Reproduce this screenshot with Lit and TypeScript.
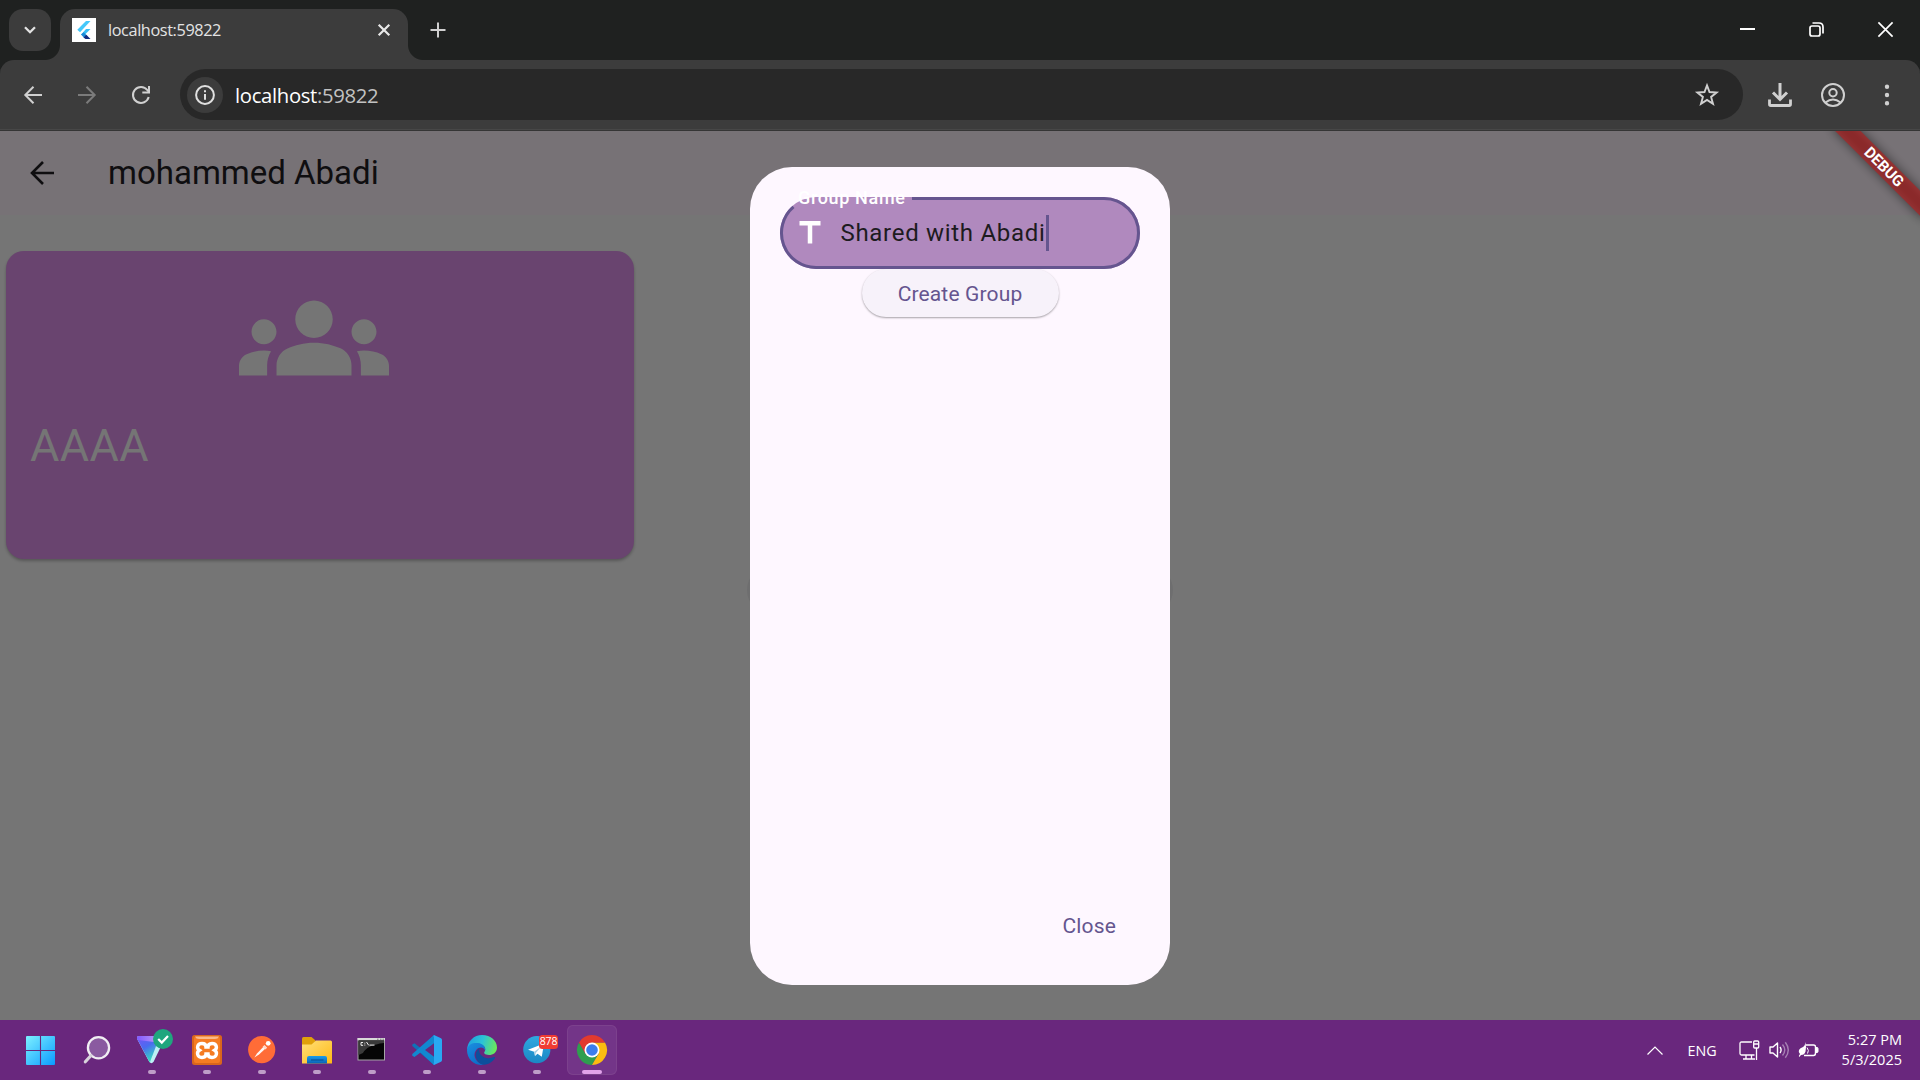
import { LitElement, html, css, nothing } from "lit";
import { customElement } from "lit/decorators.js";

interface TaskItem {
  name: string;
  state: "pinned" | "running" | "active";
  icon: unknown;
}

const startIcon = html`<svg class="ic" viewBox="0 0 30 30">
  <defs>
    <linearGradient id="w" x1="0" y1="0" x2="1" y2="1">
      <stop offset="0" stop-color="#7df0ff" /><stop offset="1" stop-color="#0a9bff" />
    </linearGradient>
  </defs>
  <rect x="-1" y="1" width="29" height="29" rx="1" fill="url(#w)" />
  <path d="M13.500 0v30M-1 15.500h30" stroke="#69277d" stroke-width="1.100" />
</svg>`;

const searchIcon = html`<svg class="ic" viewBox="0 0 30 30">
  <circle cx="16.500" cy="12.800" r="10.600" fill="#8a5aa0" stroke="#f1eef3" stroke-width="2.300" />
  <path d="M9 20.500 3.300 26.800" stroke="#d8d3dc" stroke-width="3.200" stroke-linecap="round" />
</svg>`;

const vpnIcon = html`<svg class="ic" viewBox="0 0 30 30">
  <defs>
    <linearGradient id="v1" x1="0" y1="0" x2=".5" y2="1">
      <stop offset="0" stop-color="#7a52f5" /><stop offset=".5" stop-color="#4a6cf0" /><stop offset="1" stop-color="#35dcc0" />
    </linearGradient>
    <linearGradient id="v2" x1="0" y1="0" x2="1" y2="0">
      <stop offset="0" stop-color="#8158ff" /><stop offset="1" stop-color="#c9a8f5" />
    </linearGradient>
  </defs>
  <path d="M0 2.700Q0 1.100 1.600 1.100H26Q28.500 1.500 27.300 4.500L16.600 26.800Q14.400 29.500 12.200 26.800L.4 4.500Z" fill="#bdf0f5" />
  <path d="M0 3 2 1.100 21 6 12.800 27.500 .4 4.500Z" fill="url(#v1)" />
  <path d="M0 2.700Q0 1.100 1.600 1.100H26L21 7.500 1 5.100Z" fill="url(#v2)" />
  <circle cx="26" cy="4" r="10" fill="#1fa67e" />
  <path d="m21.200 4 3.600 3.600 6.200-6.600" fill="none" stroke="#fff" stroke-width="2.200" />
</svg>`;

const xamppIcon = html`<svg class="ic" viewBox="0 0 30 30">
  <rect width="30" height="30" rx="2.500" fill="#d9661c" />
  <rect x="2" y="1.500" width="26" height="26.500" rx="2" fill="#f57c22" />
  <path d="M3 1.500h24q-1 2.500-4 2.500H7q-3 0-4-2.500Z" fill="#f9b98b" />
  <path d="M10 8.500c3 0 4 1.500 4 3.500h2c0-2 1-3.500 4-3.500 5 0 5.500 5 2.600 6.800 3.200 2 2.200 7.200-2.600 7.200-3 0-4-1.500-4-3.500h-2c0 2-1 3.500-4 3.500-4.800 0-5.800-5.200-2.600-7.200C4.500 13.500 5 8.500 10 8.500Z" fill="none" stroke="#fff" stroke-width="3.400" />
</svg>`;

const postmanIcon = html`<svg class="ic" viewBox="0 0 30 30">
  <circle cx="14.700" cy="14.700" r="13.600" fill="#ff6c37" />
  <path d="M7.400 22.500 10 18.400 17.600 10.500 19.600 12.500 12 19.500Z" fill="#fff" opacity=".95" />
  <path d="m16.500 10.800 2.800 2.900" stroke="#ffd9cb" stroke-width="2.500" />
  <circle cx="21.200" cy="8.300" r="2.400" fill="#fff" />
</svg>`;

const folderIcon = html`<svg class="ic" viewBox="0 0 30 30">
  <defs>
    <linearGradient id="f1" x1="0" y1="0" x2="1" y2="1">
      <stop offset="0" stop-color="#ffe07a" /><stop offset="1" stop-color="#ffb915" />
    </linearGradient>
    <linearGradient id="f2" x1="0" y1="0" x2="0" y2="1">
      <stop offset="0" stop-color="#1b9de8" /><stop offset="1" stop-color="#0a62b5" />
    </linearGradient>
  </defs>
  <path d="M0 3.500Q0 2 1.500 2H9.500L13.500 5.500V12H0Z" fill="#e0a00a" />
  <path d="M0 9.500H9.500L14 5.500H28.500Q30 5.500 30 7V28.500H0Z" fill="url(#f1)" />
  <path d="M5 28.500V23q0-2 2-2H23q2 0 2 2v5.500Z" fill="url(#f2)" />
  <path d="M9 25h12.500" stroke="#0a4f96" stroke-width="1.100" />
</svg>`;

const cmdIcon = html`<svg class="ic" viewBox="0 0 30 30">
  <rect x="1" y="3.500" width="26.500" height="21.500" fill="#050505" stroke="#a5a5a5" stroke-width="1" />
  <path d="M1.500 6h25.500V8Q10 10 6 18L1.500 20Z" fill="#3a3a3a" />
  <rect x=".5" y="3" width="27.500" height="2.300" fill="#d9d9d9" />
  <path d="M20 4.200h1.500m1.500 0h1.500m1 0h1.500" stroke="#777" stroke-width="1" />
  <path d="M6.100 7.500H4v2.800h2.100M7.800 7.700v.9m0 1v.9M9.500 7l2.200 3.300M12.500 10.100h5" stroke="#eee" stroke-width="1" fill="none" />
</svg>`;

const codeIcon = html`<svg class="ic" viewBox="0 0 30 30">
  <path d="M22 0 8.500 13 2.500 8.200.3 9.400V11L22 30l1-8V7Z" fill="#0f71b8" />
  <path d="M22 30 8.500 17.500 2.500 22 .3 20.800V19L22 0Z" fill="#1188d0" />
  <path d="M22 0 29 3.200Q30 3.800 30 5V25Q30 26.200 29 26.800L22 30Q21 29.500 22 27.500V2.500Q21 .8 22 0Z" fill="#29a8f2" />
  <path d="M22 8.300V21.700L13 15Z" fill="#69277d" />
</svg>`;

const edgeIcon = html`<svg class="ic" viewBox="0 0 30 30">
  <defs>
    <linearGradient id="e1" x1="0" y1=".3" x2="1" y2=".5">
      <stop offset="0" stop-color="#1f9fe0" /><stop offset=".5" stop-color="#2cc3d6" /><stop offset="1" stop-color="#6be85a" />
    </linearGradient>
    <linearGradient id="e2" x1="0" y1="0" x2=".6" y2="1">
      <stop offset="0" stop-color="#1b8fe0" /><stop offset="1" stop-color="#0c6cc8" />
    </linearGradient>
  </defs>
  <path d="M0 15C.5 6 7 0 15 0c9 0 15 6 15 12.500 0 5-4 7.500-8 7.500-4.500 0-5.500-2-4.500-3.200 2-2.500.5-7.300-5.500-7.300C6 9.500 1 12 0 15Z" fill="url(#e1)" />
  <path d="M0 15C1 9 6 7.500 11 8c5 .5 8 4 7 7.500-1-4-7-4-9.500.5-3 5.500 1 12 8.500 14C7 31 0 24 0 15Z" fill="url(#e2)" />
  <path d="M12.500 13.200C6 17 8.500 28.500 17 29.800 22 29.500 26 26.500 28 23c.5-1-.3-1.300-1-1-8 3.500-16.500-1.500-14.500-8.800Z" fill="#0d4f9c" />
</svg>`;

const telegramIcon = html`<svg class="ic" viewBox="0 0 30 30">
  <defs>
    <linearGradient id="t1" x1="0" y1="0" x2="0" y2="1">
      <stop offset="0" stop-color="#2fa9e0" /><stop offset="1" stop-color="#1b87c4" />
    </linearGradient>
  </defs>
  <circle cx="14.800" cy="14.700" r="13.600" fill="url(#t1)" />
  <path d="M6 14.800 22 8.500 19.800 21.800 15.500 18.800 13 21 12.200 16.800Z" fill="#fff" />
  <path d="m12.200 16.800 7-5.200-5.200 6.200-1 3.200Z" fill="#a9cfe4" />
</svg><span class="badge">878</span>`;

const chromeIcon = html`<svg class="ic" viewBox="0 0 30 30">
  <path d="M2 7.500A15 15 0 0 0 15 30L21.500 18.800 8.500 18.800Z" fill="#2f9e4f" />
  <path d="M28 7.500A15 15 0 0 1 15 30L21.600 18.700 15 7.500Z" fill="#fbbc10" />
  <path d="M2 7.500 8.500 18.800 15 15V7.500H28A15 15 0 0 0 2 7.500Z" fill="#e23a2e" />
  <circle cx="15" cy="15" r="7.500" fill="#fff" />
  <circle cx="15" cy="15" r="5.800" fill="#3b7ded" />
</svg>`;

const tasks: TaskItem[] = [
  { name: "start", state: "pinned", icon: startIcon },
  { name: "search", state: "pinned", icon: searchIcon },
  { name: "vpn", state: "running", icon: vpnIcon },
  { name: "xampp", state: "running", icon: xamppIcon },
  { name: "postman", state: "running", icon: postmanIcon },
  { name: "files", state: "running", icon: folderIcon },
  { name: "terminal", state: "running", icon: cmdIcon },
  { name: "code", state: "running", icon: codeIcon },
  { name: "edge", state: "running", icon: edgeIcon },
  { name: "telegram", state: "running", icon: telegramIcon },
  { name: "chrome", state: "active", icon: chromeIcon },
];

@customElement("browser-chrome")
class BrowserChrome extends LitElement {
  static styles = css`
    :host { display: flex; flex-direction: column; height: 131px; background: #1f2120; font-family: "Open Sans", "Noto Sans", sans-serif; color: #e3e3e3; }
    svg { display: block; fill: none; overflow: visible; flex: none; }
    .strip { display: flex; height: 60px; box-sizing: border-box; padding-top: 9px; }
    .list { width: 42px; height: 42px; margin-left: 9px; border-radius: 14px; background: #3c3c3c; display: grid; place-items: center; }
    .tab { position: relative; margin-left: 9px; width: 348px; height: 51px; box-sizing: border-box; padding: 0 18px 9px 12px; border-radius: 15px 15px 0 0; background: #3c3c3c; display: flex; align-items: center; }
    .tab::before, .tab::after { content: ""; position: absolute; bottom: 0; width: 15px; height: 15px; }
    .tab::before { left: -15px; background: radial-gradient(circle at 0 0, transparent 14.5px, #3c3c3c 15.5px); }
    .tab::after { right: -15px; background: radial-gradient(circle at 100% 0, transparent 14.5px, #3c3c3c 15.5px); }
    .fav { width: 24px; height: 24px; background: #fff; }
    .title { flex: 1; margin-left: 12px; font-size: 16.3px; letter-spacing: -.4px; line-height: 24px; }
    .plus { margin: 13px 0 0 22px; }
    .win { margin-left: auto; display: flex; margin-right: 27px; margin-top: 13px; gap: 54px; }
    .bar { flex: 1; box-sizing: border-box; padding: 1px 27px 2px 24px; border-radius: 14px 14px 0 0; background: #3c3c3c; border-bottom: 1px solid #353535; box-shadow: inset 0 -1px #474747; display: flex; align-items: center; }
    .gap { margin-left: 36px; }
    .omni { margin-left: 30px; width: 1563px; height: 51px; border-radius: 26px; background: #282828; box-sizing: border-box; padding: 0 24px 0 7px; display: flex; align-items: center; }
    .info { width: 36px; height: 36px; border-radius: 50%; background: #3c3c3c; display: grid; place-items: center; }
    .url { flex: 1; margin-left: 12px; font-size: 20.3px; letter-spacing: -.33px; line-height: 30px; color: #fff; }
    .port { color: #c2c2c2; }
    .download { margin-left: 25px; }
    .profile { margin-left: 29px; }
    .more { margin-left: 39px; }
  `;
  render() {
    return html`
      <div class="strip">
        <div class="list"><svg width="12" height="8" viewBox="0 0 12 8"><path d="m1 1.200 5 5 5-5" stroke="#e3e3e3" stroke-width="2.300" /></svg></div>
        <div class="tab">
          <div class="fav"><svg width="24" height="24" viewBox="0 0 24 24">
            <path d="M14 3h4.500L8 14.200 5.300 11.800Z" fill="#45c8fa" />
            <path d="M14 11h4.500L13 16.500 9 16.800Z" fill="#38bdf5" />
            <path d="m9 16.500 2.600-2.300 3 3-2.800 2.200Z" fill="#1b8ad8" />
            <path d="m11.500 19.400 2.800-2.600 4.200 4.200H13.500Z" fill="#102a80" />
          </svg></div>
          <span class="title">localhost:59822</span>
          <svg width="12" height="12" viewBox="0 0 12 12"><path d="m.7.700 10.600 10.600m0-10.600L.7 11.300" stroke="#e8e8e8" stroke-width="2.200" /></svg>
        </div>
        <svg class="plus" width="16" height="16" viewBox="0 0 16 16"><path d="M8 .5v15M.5 8h15" stroke="#d0d0d0" stroke-width="2" /></svg>
        <div class="win">
          <svg width="15" height="16" viewBox="0 0 15 16"><path d="M0 7h15" stroke="#fff" stroke-width="2" /></svg>
          <svg width="15" height="16" viewBox="0 0 15 16"><rect x="1" y="4" width="10" height="10" rx="2" stroke="#fff" stroke-width="1.700" /><path d="M3.500 1H10q4 0 4 4v6.500" stroke="#fff" stroke-width="1.700" /></svg>
          <svg width="15" height="16" viewBox="0 0 15 16"><path d="m.4.400 14.200 14.200m0-14.200L.4 14.600" stroke="#fff" stroke-width="1.700" /></svg>
        </div>
      </div>
      <div class="bar">
        <svg width="18" height="18" viewBox="0 0 18 18"><path d="M18 9H1.500M9.500.8 1.300 9l8.200 8.200" stroke="#d0d0d0" stroke-width="2" /></svg>
        <svg class="gap" width="18" height="18" viewBox="0 0 18 18"><path d="M0 9h16.500M8.500.8 16.700 9l-8.200 8.200" stroke="#7b7b7b" stroke-width="2" /></svg>
        <svg class="gap" width="18" height="18" viewBox="0 0 18 18"><path d="M16.700 11A8 8 0 1 1 15.300 4L16.800 5.700" stroke="#d0d0d0" stroke-width="2" /><path d="M17 0v6.500h-6.700" stroke="#d0d0d0" stroke-width="2" /></svg>
        <div class="omni">
          <div class="info"><svg width="20" height="20" viewBox="0 0 20 20"><circle cx="10" cy="10" r="8.900" stroke="#e0e0e0" stroke-width="2" /><path d="M10 9v5.700M10 5.300v2" stroke="#e0e0e0" stroke-width="2" /></svg></div>
          <span class="url">localhost<span class="port">:59822</span></span>
          <svg width="24" height="24" viewBox="0 0 24 24"><path d="m12 2.400 2.500 6.600 7.100.5-5.500 4.400 1.900 7L12 17l-6 3.900 1.900-7L2.400 9.500 9.500 9Z" stroke="#d0d0d0" stroke-width="1.900" /></svg>
        </div>
        <svg class="download" width="24" height="24" viewBox="0 0 24 24"><path d="M12 0v15.500M5 9.500l7 7 7-7" stroke="#d0d0d0" stroke-width="3" /><path d="M1.500 16.500v4.700q0 1.300 1.300 1.300h18.400q1.300 0 1.300-1.300v-4.700" stroke="#d0d0d0" stroke-width="2.800" /></svg>
        <svg class="profile" width="24" height="24" viewBox="0 0 24 24"><circle cx="12" cy="12" r="11" stroke="#d0d0d0" stroke-width="2" /><circle cx="12" cy="9.700" r="3.700" stroke="#d0d0d0" stroke-width="2" /><path d="M4.500 19.500Q12 13.500 19.500 19.500" stroke="#d0d0d0" stroke-width="2" /></svg>
        <svg class="more" width="6" height="22" viewBox="0 0 6 22"><path fill="#d0d0d0" d="M3 .6a2.200 2.200 0 1 1 0 4.400 2.200 2.200 0 0 1 0-4.400Zm0 8.200a2.200 2.200 0 1 1 0 4.400 2.200 2.200 0 0 1 0-4.400ZM3 17a2.200 2.200 0 1 1 0 4.400A2.200 2.200 0 0 1 3 17Z" /></svg>
      </div>
    `;
  }
}

@customElement("groups-page")
class GroupsPage extends LitElement {
  static styles = css`
    :host { position: relative; display: flex; flex-direction: column; height: 889px; background: #757575; overflow: hidden; font-family: Roboto, sans-serif; }
    svg { display: block; flex: none; overflow: visible; }
    .appbar { height: 84px; background: #777276; display: flex; align-items: center; color: #0f0e10; padding-left: 30px; }
    .appbar h1 { margin: 0 0 0 54px; font-size: 33px; line-height: 42px; font-weight: 400; }
    .card { margin: 36px 0 0 6px; width: 628px; height: 308px; box-sizing: border-box; border-radius: 18px; background: #69446f; color: #757575; padding: 12px 36px 12px 24px; box-shadow: 0 2px 3px rgba(0,0,0,.25); display: flex; flex-direction: column; }
    .card svg { align-self: center; }
    .card span { font-size: 45px; line-height: 53px; margin-top: 6px; letter-spacing: .4px; }
    .glow { position: absolute; left: 747px; top: 434px; width: 426px; height: 50px; border-radius: 25px; background: #6e6e6f; }
    .dialog { position: absolute; left: 750px; top: 36px; width: 420px; height: 818px; box-sizing: border-box; border-radius: 42px; background: #fef7ff; padding: 30px 30px 36px; display: flex; flex-direction: column; align-items: center; }
    .field { position: relative; width: 360px; height: 72px; box-sizing: border-box; border-radius: 36px; background: #b089be; display: flex; align-items: center; padding-left: 12px; }
    .outline { position: absolute; inset: 0; }
    .label { position: absolute; left: 18px; top: -10px; font-size: 18px; line-height: 22px; letter-spacing: .65px; font-weight: 500; color: #fff; white-space: nowrap; }
    .value { margin-left: 12.5px; font-size: 24px; line-height: 36px; letter-spacing: .7px; color: #1d1b20; }
    .caret { width: 3px; height: 36px; background: #65558f; margin-left: .5px; }
    .create { width: 197px; height: 48px; box-sizing: border-box; padding-top: 1px; border-radius: 24px; background: #f7f2fa; box-shadow: 0 1px 2px rgba(0,0,0,.35); display: grid; place-items: center; }
    .create, .close { font-size: 21px; line-height: 30px; letter-spacing: .15px; color: #65558f; }
    .close { margin: auto 24px 0 0; align-self: flex-end; padding-bottom: 8px; }
    .corner { position: absolute; left: 1920px; top: 0; width: 0; height: 0; transform: rotate(45deg); }
    .shade, .ribbon { position: absolute; left: -65px; top: 42px; width: 130px; height: 18px; }
    .shade { background: rgba(0,0,0,.5); filter: blur(5.5px); }
    .ribbon { background: rgba(183,28,28,.627); color: #fff; font-size: 15.3px; line-height: 18px; font-weight: 700; text-align: center; }
  `;
  render() {
    return html`
      <header class="appbar">
        <svg width="24" height="24" viewBox="0 0 24 24"><path d="M24 12H2M13 1 2 12l11 11" fill="none" stroke="#0f0e10" stroke-width="2.600" /></svg>
        <h1>mohammed Abadi</h1>
      </header>
      <div class="card">
        <svg width="150" height="150" viewBox="0 0 24 24" fill="#757575">
          <path d="M12 12.750c1.630 0 3.070.390 4.240.9 1.080.480 1.760 1.560 1.760 2.730V18H6v-1.610c0-1.180.680-2.260 1.760-2.730 1.170-.520 2.610-.910 4.240-.910zM4 13c1.100 0 2-.9 2-2s-.9-2-2-2-2 .9-2 2 .9 2 2 2zm1.130 1.100c-.370-.060-.740-.100-1.130-.100-.990 0-1.930.210-2.780.580C.480 14.900 0 15.620 0 16.430V18h4.500v-1.610c0-.830.230-1.610.630-2.290zM20 13c1.100 0 2-.9 2-2s-.9-2-2-2-2 .9-2 2 .9 2 2 2zm4 3.430c0-.810-.480-1.530-1.220-1.850-.850-.370-1.790-.580-2.780-.580-.390 0-.760.040-1.130.100.400.680.630 1.460.630 2.290V18H24v-1.570zM12 6c1.660 0 3 1.340 3 3s-1.340 3-3 3-3-1.340-3-3 1.340-3 3-3z" />
        </svg>
        <span>AAAA</span>
      </div>
      <div class="glow"></div>
      <section class="dialog">
        <div class="field">
          <svg class="outline" width="360" height="72" viewBox="0 0 360 72"><path d="M132 1.500H324A34.500 34.500 0 0 1 324 70.500H36A34.500 34.500 0 0 1 13.500 9.850" fill="none" stroke="#65558f" stroke-width="3" /></svg>
          <span class="label">Group Name</span>
          <svg width="36" height="36" viewBox="0 0 24 24" fill="#fff"><path d="M5 4v3h5.500v12h3V7H19V4z" /></svg>
          <span class="value">Shared with Abadi</span>
          <span class="caret"></span>
        </div>
        <div class="create">Create Group</div>
        <div class="close">Close</div>
      </section>
      <div class="corner"><div class="shade"></div><div class="ribbon">DEBUG</div></div>
    `;
  }
}

@customElement("task-bar")
class TaskBar extends LitElement {
  static styles = css`
    :host { display: flex; align-items: center; height: 60px; box-sizing: border-box; padding: 0 18px 0 17px; background: #69277d; color: #fff; font-family: "Open Sans", "Noto Sans", sans-serif; }
    svg { display: block; overflow: visible; flex: none; }
    .apps { display: flex; gap: 5px; }
    .slot { position: relative; width: 50px; height: 50px; border-radius: 6px; display: flex; flex-direction: column; align-items: center; box-sizing: border-box; padding-top: 10px; }
    .slot.active { background: #733588; box-shadow: inset 0 0 0 1px #7c418d; }
    .ic { width: 30px; height: 30px; }
    .dot { margin-top: 5px; width: 8px; height: 4px; border-radius: 2px; background: #bf9dc8; }
    .active .dot { width: 20px; background: #e2a2ea; }
    .badge { position: absolute; left: 27px; top: 10px; width: 19px; height: 14px; border-radius: 3.5px; background: #f03c32; font-size: 10.5px; line-height: 13.5px; text-align: center; letter-spacing: -.2px; }
    .tray { margin-left: auto; display: flex; align-items: center; }
    .lang { font-size: 14.3px; line-height: 20px; margin-left: 25px; padding-top: 1px; }
    .net { margin-left: 22px; }
    .vol { margin-left: 9px; }
    .bat { margin-left: 8.5px; }
    .clock { font-size: 14.5px; line-height: 20px; text-align: right; margin-left: 22.5px; }
  `;
  render() {
    return html`
      <div class="apps">
        ${tasks.map((t) => html`<div class="slot ${t.state}">${t.icon}${t.state === "pinned" ? nothing : html`<i class="dot"></i>`}</div>`)}
      </div>
      <div class="tray">
        <svg width="16" height="9" viewBox="0 0 16 9"><path d="M.5 8.500 8 1l7.500 7.500" fill="none" stroke="#fff" stroke-width="1.200" /></svg>
        <span class="lang">ENG</span>
        <svg class="net" width="21" height="20" viewBox="0 0 21 20" fill="none" stroke="#fff" stroke-width="1.300">
          <path d="M13 2H2.500Q1 2 1 3.500v10Q1 15 2.500 15H15.500M7 15v3.500M12.500 15v3.500M4 19h12" />
          <rect x="14.700" y="1" width="5" height="7" rx="1" /><path d="M15 4h4.500M17.500 8v12" />
        </svg>
        <svg class="vol" width="21" height="18" viewBox="0 0 21 18" fill="none" stroke="#fff" stroke-width="1.400">
          <path d="M1 6h3L8.500 2v14L4 12H1Z" stroke-linejoin="round" /><path d="M11 6q2.200 3 0 6" />
          <path d="M13.500 3.500q4.500 5.500 0 11M16.300 1.200q6 7.800 0 15.600" stroke="#a67fb3" />
        </svg>
        <svg class="bat" width="21" height="16" viewBox="0 0 21 16" fill="none">
          <path d="M8 3h7.500Q17.500 3 17.500 5v6Q17.500 13.500 15.500 13.500H6" stroke="#fff" stroke-width="1.400" />
          <path d="M18 5.500h1q1 0 1 1v3q0 1-1 1h-1Z" fill="#fff" stroke="#fff" />
          <path d="M7.500 0Q8.500 5 7.500 9.500 6.500 13 3 13L1.300 15 .8 14 2 12Q0 10.500 1 8 2 6 5 5 7 4 7.500 0Z" fill="#fff" />
          <path d="M9 5.500q2.500 3 .5 6" stroke="#fff" stroke-width="1" />
        </svg>
        <div class="clock">5:27 PM<br />5/3/2025</div>
      </div>
    `;
  }
}

@customElement("app-root")
class AppRoot extends LitElement {
  static styles = css`
    :host { display: flex; flex-direction: column; width: 1920px; height: 1080px; overflow: hidden; }
  `;
  render() {
    return html`<browser-chrome></browser-chrome><groups-page></groups-page><task-bar></task-bar>`;
  }
}
